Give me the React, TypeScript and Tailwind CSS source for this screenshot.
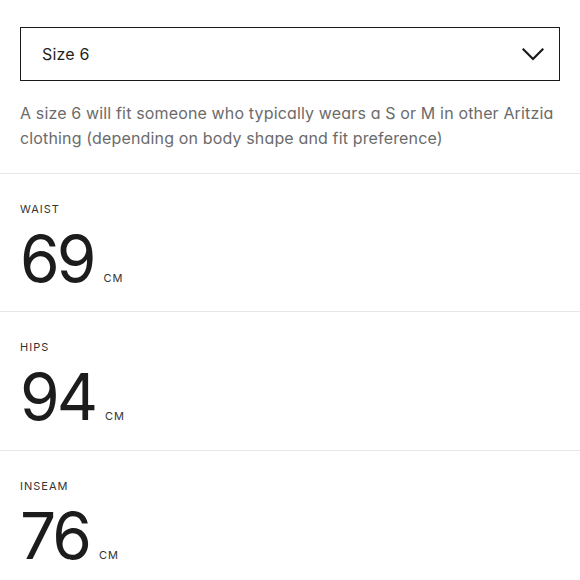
import React from 'react';

const measurements = [
  {label: 'Waist', value: '69'},
  {label: 'Hips', value: '94'},
  {label: 'Inseam', value: '76'},
];

function Chevron() {
  return (
    <svg width="22" height="13" viewBox="0 0 22 13" fill="none" className="shrink-0">
      <path d="M1.5 1.5L11 11L20.5 1.5" stroke="#1a1a1a" strokeWidth="2.2" strokeLinecap="square" />
    </svg>
  );
}

export default function App() {
  return (
    <div
      className="w-[580px] min-h-[580px] bg-white text-[#1f1f1f] [font-feature-settings:'cv11']"
      style={{fontFamily: 'Inter, "Noto Sans", sans-serif'}}
    >
      {/* Size selector */}
      <div className="px-5 pt-[27px]">
        <button className="flex w-full h-[54px] items-center justify-between border border-[#1a1a1a] pl-[21px] pr-[15px] text-left">
          <span className="text-[16px] text-[#1f1f1f] tracking-[0.2px]">Size 6</span>
          <Chevron />
        </button>
        <p className="mt-[20px] text-[16px] leading-[25px] text-[#6b6b6b] tracking-[0.15px]">
          A size 6 will fit someone who typically wears a S or M in other Aritzia clothing (depending on body
          shape and fit preference)
        </p>
      </div>

      {/* Measurements */}
      <div className="mt-[22px]">
        {measurements.map((m, i) => (
          <div
            key={m.label}
            className={`border-t border-[#e6e6e6] px-5 pt-[27px] ${i === 0 ? 'h-[138px]' : 'h-[139px]'}`}
          >
            <div className="text-[11px] leading-[16px] uppercase tracking-[1px] text-[#333]">{m.label}</div>
            <div className="mt-[10px] flex items-baseline">
              <span className="text-[64px] leading-[64px] tracking-[-3px] text-[#1c1c1c]">{m.value}</span>
              <span className="ml-[10px] text-[11px] uppercase tracking-[1px] text-[#333]">cm</span>
            </div>
          </div>
        ))}
      </div>
    </div>
  );
}
